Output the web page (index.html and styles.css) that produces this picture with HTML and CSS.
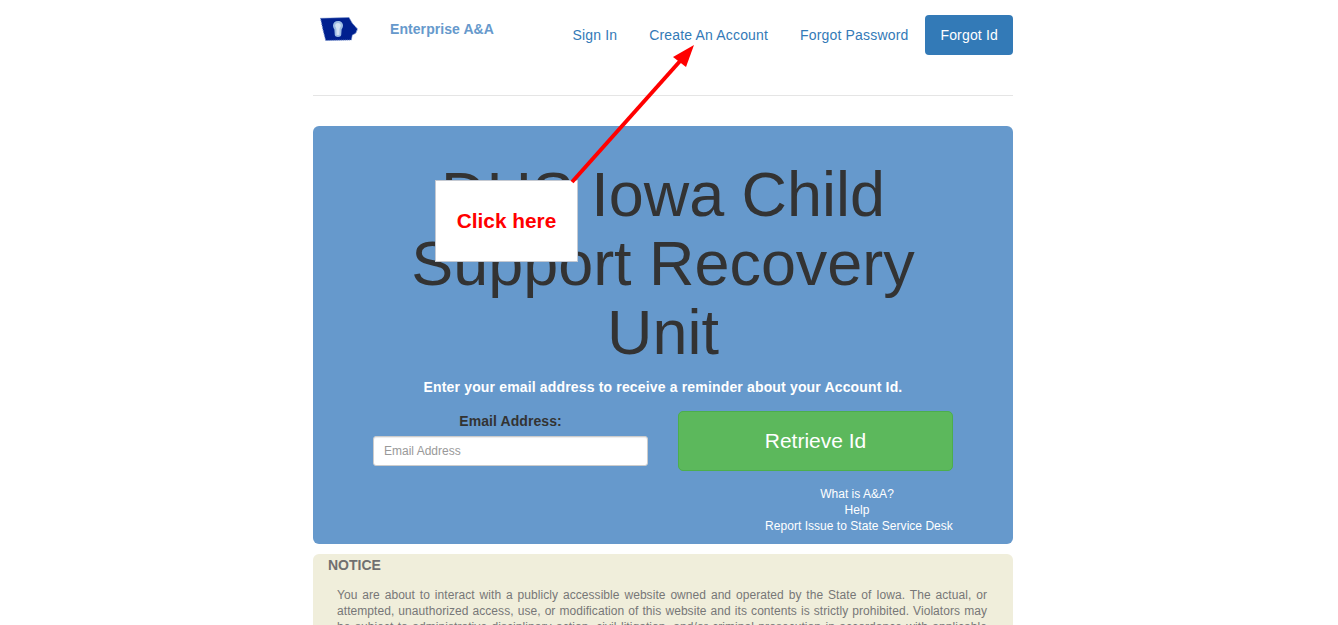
FILE: index.html
```html
<!DOCTYPE html>
<html lang="en">
<head>
<meta charset="utf-8">
<title>Forgot Id</title>
<link rel="stylesheet" href="styles.css">
</head>
<body>
<div class="page">
  <div class="container">
    <header class="header">
      <div class="brand">
        <svg class="logo" viewBox="0 0 38 24" width="38" height="24" aria-hidden="true">
          <path d="M0.5 1.3 L29 0.5 L32.3 6.3 L37.5 12 L35.7 16.3 L32.3 18 L31.3 23 L5.7 23.5 L3 13 Z" fill="#00208f" stroke="#6f8ccb" stroke-width="1" stroke-dasharray="1 1"/>
          <path d="M18 4 C21 4 23 6 23 8.5 C23 10.5 22 11.5 21.6 12.5 L21.2 18 C21 20.5 15 20.5 14.8 18 L14.4 12.5 C14 11.5 13 10.5 13 8.5 C13 6 15 4 18 4 Z" fill="#9dbde4"/>
          <path d="M18 6 C19.6 6 20.8 7.2 20.8 8.6 C20.8 10 19.8 10.8 19.6 12 L19.4 18 L16.6 18 L16.4 12 C16.2 10.8 15.2 10 15.2 8.6 C15.2 7.2 16.4 6 18 6 Z" fill="#d3e2f3"/>
        </svg>
        <span class="brand-name">Enterprise A&amp;A</span>
      </div>
      <nav class="nav">
        <a class="pill" href="#">Sign In</a>
        <a class="pill" href="#">Create An Account</a>
        <a class="pill" href="#">Forgot Password</a>
        <a class="pill active" href="#">Forgot Id</a>
      </nav>
    </header>

    <main class="jumbotron">
      <h1 class="title">DHS Iowa Child Support Recovery Unit</h1>
      <p class="lead">Enter your email address to receive a reminder about your Account Id.</p>
      <form class="form">
        <div class="field">
          <label class="label" for="email">Email Address:</label>
          <input class="input" id="email" type="text" placeholder="Email Address">
        </div>
        <button class="submit" type="button">Retrieve Id</button>
      </form>
      <div class="links">
        <div class="links-inner">
          <a class="link" href="#">What is A&amp;A?</a>
          <a class="link" href="#">Help</a>
          <a class="link" href="#">Report Issue to State Service Desk</a>
        </div>
      </div>
    </main>

    <section class="notice">
      <h2 class="notice-title">NOTICE</h2>
      <p class="notice-text">You are about to interact with a publicly accessible website owned and operated by the State of Iowa. The actual, or attempted, unauthorized access, use, or modification of this website and its contents is strictly prohibited. Violators may be subject to administrative disciplinary action, civil litigation, and/or criminal prosecution in accordance with applicable federal and state laws and regulations.</p>
    </section>
  </div>

  <div class="callout">Click here</div>
  <svg class="arrow" viewBox="0 0 1338 625" width="1338" height="625" aria-hidden="true">
    <line x1="572" y1="182" x2="681" y2="60" stroke="#ff0000" stroke-width="4"/>
    <polygon points="694,45 673,57 686,67" fill="#ff0000"/>
  </svg>
</div>
</body>
</html>
```
FILE: styles.css
```css
* { box-sizing: border-box; }
html, body {
  margin: 0;
  height: 625px;
  overflow: hidden;
  background: #fff;
}
body {
  font-family: "Liberation Sans", Arial, sans-serif;
  font-size: 14px;
  line-height: 20px;
  color: #333;
}
.page {
  position: relative;
  width: 1338px;
  height: 625px;
  overflow: hidden;
  padding-right: 12px;
}
.container {
  width: 700px;
  margin: 0 auto;
}
.header {
  height: 96px;
  display: flex;
  justify-content: space-between;
  align-items: flex-start;
  border-bottom: 1px solid #e5e5e5;
  padding-top: 15px;
}
.brand {
  display: flex;
  align-items: flex-start;
  padding-left: 7px;
}
.logo { margin-top: 2px; flex: none; }
.brand-name {
  margin-left: 32px;
  margin-top: 4px;
  font-weight: 700;
  letter-spacing: .07px;
  color: #6699cc;
}
.nav {
  display: flex;
  gap: 2px;
}
.pill {
  display: block;
  padding: 10px 15px;
  border-radius: 4px;
  color: #337ab7;
  letter-spacing: .17px;
  text-decoration: none;
}
.active {
  background: #337ab7;
  color: #fff;
}
.jumbotron {
  margin-top: 30px;
  height: 418px;
  padding: 30px 60px 0;
  background: #6699cc;
  border-radius: 6px;
  text-align: center;
}
.title {
  margin: 4px 0 0;
  font-size: 62.9px;
  line-height: 69px;
  font-weight: 400;
  color: #333;
}
.lead {
  margin: 10px 0 0;
  font-weight: 700;
  letter-spacing: .16px;
  color: #fff;
}
.form {
  display: flex;
  gap: 30px;
  margin-top: 14px;
}
.field {
  width: 275px;
}
.label {
  display: block;
  height: 25px;
  font-weight: 700;
  letter-spacing: .08px;
  color: #333;
  line-height: 20px;
}
.input {
  display: block;
  width: 100%;
  height: 30px;
  padding: 5px 10px;
  font: 12px/18px "Liberation Sans", Arial, sans-serif;
  color: #555;
  background: #fff;
  border: 1px solid #ccc;
  border-radius: 3px;
  box-shadow: inset 0 1px 1px rgba(0,0,0,.075);
}
.input::placeholder { color: #999; opacity: 1; }
.submit {
  width: 275px;
  height: 60px;
  font: 21px/20px "Liberation Sans", Arial, sans-serif;
  color: #fff;
  background: #5cb85c;
  border: 1px solid #4cae4c;
  border-radius: 5px;
}
.links {
  display: flex;
  justify-content: flex-end;
  margin-top: 15px;
}
.links-inner {
  width: 188px;
  display: flex;
  flex-direction: column;
  align-items: center;
  font-size: 12px;
  line-height: 16px;
  letter-spacing: .03px;
}
.link { color: #fff; text-decoration: none; }
.link:nth-child(-n+2) { margin-right: 4px; }
.notice {
  margin-top: 10px;
  height: 120px;
  padding: 0 26px 0 15px;
  background: #f0eedb;
  border-radius: 6px 6px 0 0;
  color: #777;
}
.notice-title {
  margin: 0;
  padding-top: 1px;
  font-size: 14px;
  line-height: 20px;
  font-weight: 700;
  color: #707070;
}
.notice-text {
  margin: 12px 0 0 9px;
  font-size: 12px;
  line-height: 16px;
  letter-spacing: .06px;
  text-align: justify;
}
.arrow {
  position: absolute;
  left: 0;
  top: 0;
  pointer-events: none;
}
.callout {
  position: absolute;
  left: 435px;
  top: 180px;
  width: 143px;
  height: 82px;
  display: flex;
  align-items: center;
  justify-content: center;
  background: #fff;
  border: 1px solid #c4c9d2;
  font-size: 20.8px;
  font-weight: 700;
  color: #f00;
}
```
